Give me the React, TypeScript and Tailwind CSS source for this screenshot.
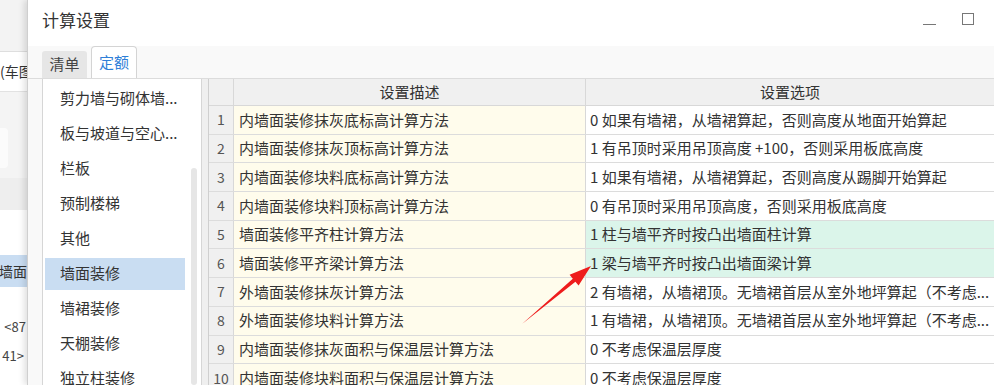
import React from 'react';

const FONT = '"Noto Sans CJK SC", "Microsoft YaHei", sans-serif';

const menuItems = [
  '剪力墙与砌体墙...',
  '板与坡道与空心...',
  '栏板',
  '预制楼梯',
  '其他',
  '墙面装修',
  '墙裙装修',
  '天棚装修',
  '独立柱装修',
];

interface SettingRow {
  desc: string;
  option: string;
  highlight?: boolean;
}

const rows: SettingRow[] = [
  { desc: '内墙面装修抹灰底标高计算方法', option: '0 如果有墙裙，从墙裙算起，否则高度从地面开始算起' },
  { desc: '内墙面装修抹灰顶标高计算方法', option: '1 有吊顶时采用吊顶高度 +100，否则采用板底高度' },
  { desc: '内墙面装修块料底标高计算方法', option: '1 如果有墙裙，从墙裙算起，否则高度从踢脚开始算起' },
  { desc: '内墙面装修块料顶标高计算方法', option: '0 有吊顶时采用吊顶高度，否则采用板底高度' },
  { desc: '墙面装修平齐柱计算方法', option: '1 柱与墙平齐时按凸出墙面柱计算', highlight: true },
  { desc: '墙面装修平齐梁计算方法', option: '1 梁与墙平齐时按凸出墙面梁计算', highlight: true },
  { desc: '外墙面装修抹灰计算方法', option: '2 有墙裙，从墙裙顶。无墙裙首层从室外地坪算起（不考虑...' },
  { desc: '外墙面装修块料计算方法', option: '1 有墙裙，从墙裙顶。无墙裙首层从室外地坪算起（不考虑...' },
  { desc: '内墙面装修抹灰面积与保温层计算方法', option: '0 不考虑保温层厚度' },
  { desc: '内墙面装修块料面积与保温层计算方法', option: '0 不考虑保温层厚度' },
];

// the main window peeking out behind the dialog
const BackWindow = () => (
  <aside className="flex w-[27px] shrink-0 flex-col overflow-hidden bg-white text-[14px] text-[#333]">
    <div className="h-[52px] shrink-0 border-b border-[#dedede] bg-[#f3f3f3]" />
    <div className="flex h-[40px] shrink-0 items-center whitespace-nowrap border-b border-[#e2e2e2]">(车图</div>
    <div className="h-[36px] shrink-0 bg-[#f4f4f4]" />
    <div className="flex h-[40px] shrink-0 bg-[#f4f4f4]">
      <div className="w-[8px] rounded-r-[4px] bg-[#fbfbfb]" />
    </div>
    <div className="h-[10px] shrink-0 bg-[#f4f4f4]" />
    <div className="h-[32px] shrink-0 bg-[#eeeeee]" />
    <div className="h-[45px] shrink-0" />
    <div className="flex h-[32px] shrink-0 items-center justify-end whitespace-nowrap bg-[#c9ddf2]">内墙面</div>
    <div className="h-[28px] shrink-0" />
    <div className="flex h-[24px] shrink-0 items-center justify-end pr-[1px] text-[13px] text-[#444]">&lt;87</div>
    <div className="flex h-[34px] shrink-0 items-center justify-end pr-[3px] text-[13px] text-[#444]">41&gt;</div>
  </aside>
);

export default function App() {
  return (
    <div
      className="relative flex h-[385px] w-[994px] overflow-hidden bg-white text-[#333]"
      style={{ fontFamily: FONT }}
    >
      <BackWindow />

      <div className="flex min-w-0 flex-1 flex-col border-l border-[#cfcfcf] bg-[#f9f9f9] shadow-[-3px_0_6px_rgba(0,0,0,0.12)]">
        {/* title bar */}
        <div className="flex h-[46px] shrink-0 items-center justify-between bg-white pl-[14px] pr-[20px]">
          <span className="-mt-[6px] text-[17px] text-[#333]">计算设置</span>
          <div className="-mt-[8px] flex items-center gap-[26px]">
            <span className="mt-[10px] block h-px w-[13px] bg-[#777]" />
            <span className="block h-[12px] w-[12px] border border-[#777]" />
          </div>
        </div>

        {/* tabs */}
        <div className="flex h-[32px] shrink-0 items-end gap-[4px] pl-[14px]">
          <div className="flex h-[27px] w-[45px] items-center justify-center rounded-t-[3px] bg-[#e6e6e6] text-[15px] text-[#444]">
            清单
          </div>
          <div className="flex h-[32px] w-[46px] items-center justify-center rounded-t-[4px] border border-b-0 border-[#d4d4d4] bg-white text-[15px] text-[#2f7fd8]">
            定额
          </div>
        </div>

        {/* content */}
        <div className="flex min-h-0 flex-1 border-t border-[#dcdcdc]">
          <div className="w-[14px] shrink-0" />

          {/* category list */}
          <div className="flex w-[160px] shrink-0 border-x border-[#d6d6d6] bg-white">
            <ul className="flex-1 pt-[2px]">
              {menuItems.map((item) => (
                <li key={item} className="h-[35px] px-[2px] py-[1.5px]">
                  <div
                    className={`flex h-full items-center pl-[15px] text-[15px] ${
                      item === '墙面装修' ? 'bg-[#c9ddf2]' : ''
                    }`}
                  >
                    {item}
                  </div>
                </li>
              ))}
            </ul>
            <div className="w-[14px] shrink-0 pl-[4px] pr-[4px] pt-[89px]">
              <div className="h-full rounded-full bg-[#e6e6e6]" />
            </div>
          </div>

          <div className="w-[6px] shrink-0 bg-[#efefef]" />

          {/* settings table */}
          <div className="min-w-0 flex-1 border-l border-[#cfcfcf] bg-white">
            <div className="flex h-[27px] border-b border-[#d8d8d8] bg-[#f0f0f0] text-[15px]">
              <div className="w-[25px] shrink-0 border-r border-[#d8d8d8]" />
              <div className="flex w-[352px] shrink-0 items-center justify-center border-r border-[#d8d8d8]">设置描述</div>
              <div className="flex w-[408px] shrink-0 items-center justify-center">设置选项</div>
            </div>
            {rows.map((row, i) => (
              <div key={i} className="flex h-[28.7px] border-b border-[#dcdcdc] text-[15px]">
                <div className="flex w-[25px] shrink-0 items-center justify-center border-r border-[#d8d8d8] bg-[#f0f0f0] text-[14px] text-[#555]">
                  {i + 1}
                </div>
                <div className="flex w-[352px] shrink-0 items-center border-r border-[#d8d8d8] bg-[#fffcec] pl-[5px] whitespace-nowrap">
                  {row.desc}
                </div>
                <div
                  className={`flex w-[408px] shrink-0 items-center overflow-hidden whitespace-nowrap pl-[4px] ${
                    row.highlight ? 'bg-[#dbf5ea]' : 'bg-white'
                  }`}
                >
                  {row.option}
                </div>
              </div>
            ))}
          </div>
        </div>
      </div>

      {/* annotation arrow */}
      <svg className="pointer-events-none absolute inset-0" width="994" height="385" viewBox="0 0 994 385">
        <polygon
          points="522,324 575.4,281.7 578.6,285.6 591,266 569.6,274.8 572.8,278.7"
          fill="#ee1c1c"
        />
      </svg>
    </div>
  );
}
